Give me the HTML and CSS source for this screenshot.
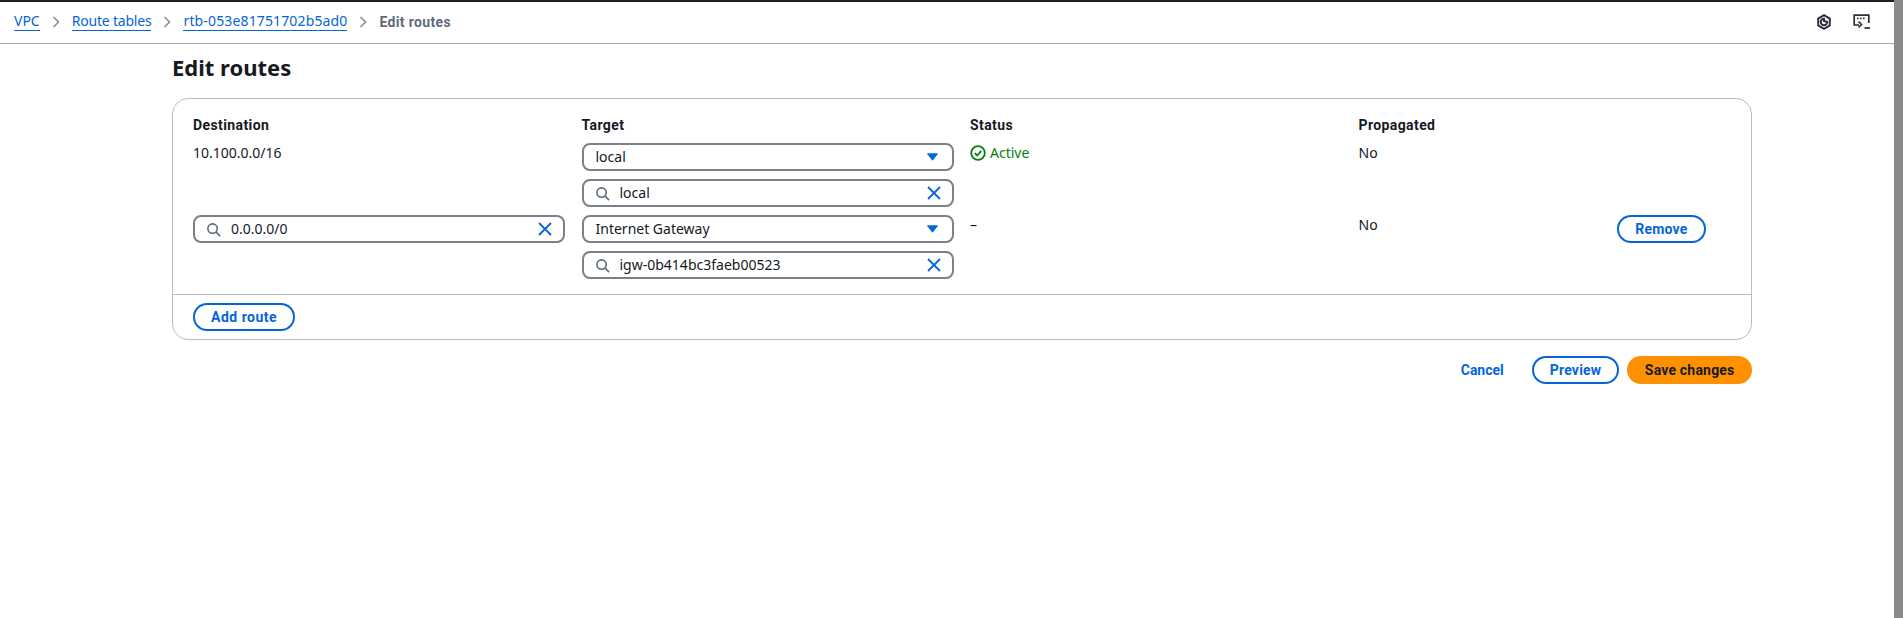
FILE: index.html
```html
<!DOCTYPE html>
<html>
<head>
	<title>Edit routes</title>
	<link rel="stylesheet" href="styles.css">
</head>
<body>
	<div class="app">
		<div class="main">
			<header class="topbar">
				<nav class="crumbs">
					<a class="crumb" href="#">VPC</a>
					<svg class="chev" viewBox="0 0 8 12"><path d="M1.5 1l5 5-5 5"/></svg>
					<a class="crumb crumb-tight" href="#">Route tables</a>
					<svg class="chev" viewBox="0 0 8 12"><path d="M1.5 1l5 5-5 5"/></svg>
					<a class="crumb crumb-wide" href="#">rtb-053e81751702b5ad0</a>
					<svg class="chev" viewBox="0 0 8 12"><path d="M1.5 1l5 5-5 5"/></svg>
					<span class="crumb-current">Edit routes</span>
				</nav>
				<div class="tools">
					<svg class="tool" viewBox="0 0 16 16"><path d="M8 1.2l5.8 3.4v6.8L8 14.8l-5.8-3.4V4.6z"/><path d="M8 4.8A3.2 3.2 0 1 0 11.2 8L8 7z"/></svg>
					<svg class="tool tool-term" viewBox="0 0 18 16"><path d="M6 11H1.2V1.2h14.6V9"/><path class="term-dots" d="M4 4.4h1.6M7 4.4h1.6M10 4.4h1.6"/><path d="M5.5 7.5l3 3-3 3"/><path d="M11.5 14h5.5"/></svg>
				</div>
			</header>

			<div class="content">
				<h1 class="title">Edit routes</h1>

				<section class="card">
					<div class="routes">
						<div class="col-head">Destination</div>
						<div class="col-head">Target</div>
						<div class="col-head">Status</div>
						<div class="col-head">Propagated</div>

						<div class="cell">10.100.0.0/16</div>
						<div class="cell stack">
							<div class="field field-select">
								<span class="field-text">local</span>
								<svg class="caret" viewBox="0 0 12 8"><path d="M0.5 0.5h11L6 7.5z"/></svg>
							</div>
							<div class="field">
								<svg class="search" viewBox="0 0 16 16"><circle cx="7" cy="7" r="5"/><path d="M10.6 10.6L15 15"/></svg>
								<span class="field-text">local</span>
								<svg class="clear" viewBox="0 0 14 14"><path d="M1 1l12 12M13 1L1 13"/></svg>
							</div>
						</div>
						<div class="cell status-ok">
							<svg class="check" viewBox="0 0 16 16"><circle cx="8" cy="8" r="6.8"/><path d="M4.8 8.2l2.3 2.3 4.2-4.6"/></svg>
							Active
						</div>
						<div class="cell">No</div>

						<div class="cell">
							<div class="field">
								<svg class="search" viewBox="0 0 16 16"><circle cx="7" cy="7" r="5"/><path d="M10.6 10.6L15 15"/></svg>
								<span class="field-text">0.0.0.0/0</span>
								<svg class="clear" viewBox="0 0 14 14"><path d="M1 1l12 12M13 1L1 13"/></svg>
							</div>
						</div>
						<div class="cell stack">
							<div class="field field-select">
								<span class="field-text">Internet Gateway</span>
								<svg class="caret" viewBox="0 0 12 8"><path d="M0.5 0.5h11L6 7.5z"/></svg>
							</div>
							<div class="field">
								<svg class="search" viewBox="0 0 16 16"><circle cx="7" cy="7" r="5"/><path d="M10.6 10.6L15 15"/></svg>
								<span class="field-text">igw-0b414bc3faeb00523</span>
								<svg class="clear" viewBox="0 0 14 14"><path d="M1 1l12 12M13 1L1 13"/></svg>
							</div>
						</div>
						<div class="cell">–</div>
						<div class="cell cell-last">
							<span>No</span>
							<button class="btn" type="button">Remove</button>
						</div>
					</div>
					<div class="card-foot">
						<button class="btn btn-wide" type="button">Add route</button>
					</div>
				</section>

				<div class="actions">
					<a class="btn-link" href="#">Cancel</a>
					<button class="btn" type="button">Preview</button>
					<button class="btn btn-primary" type="button">Save changes</button>
				</div>
			</div>
		</div>
		<div class="scroll-strip"></div>
	</div>
</body>
</html>
```

FILE: styles.css
```css
* {
	box-sizing: border-box;
}
html, body {
	margin: 0;
	height: 100%;
	overflow: hidden;
}
body {
	font-family: "Noto Sans", "Open Sans", sans-serif;
	font-size: 14px;
	line-height: 20px;
	color: #16191f;
	background: #fff;
}
.app {
	display: flex;
	height: 618px;
}
.main {
	flex: 1;
	min-width: 0;
	border-top: 2px solid #1b2028;
}
.scroll-strip {
	width: 9px;
	background: #8a8a8a;
}

/* barra de cima */
.topbar {
	display: flex;
	justify-content: space-between;
	align-items: center;
	height: 42px;
	padding: 0 23px 2px 14px;
	border-bottom: 1px solid #a9a9ad;
}
.crumbs {
	display: flex;
	align-items: center;
	gap: 12px;
}
.crumb {
	color: #0565d8;
	text-decoration: none;
	border-bottom: 1px solid #0565d8;
	line-height: 18px;
}
.crumb-tight {
	letter-spacing: -0.2px;
}
.crumb-wide {
	letter-spacing: 0.14px;
}
.crumb-current {
	color: #5f6b7a;
	font-family: Roboto, sans-serif;
	font-weight: 700;
	letter-spacing: 0.35px;
}
.chev {
	width: 8px;
	height: 12px;
	fill: none;
	stroke: #8c8c94;
	stroke-width: 1.6;
}
.tools {
	display: flex;
	align-items: center;
	gap: 21px;
}
.tool {
	width: 16px;
	height: 16px;
	fill: none;
	stroke: #2b3038;
	stroke-width: 2;
}
.tool-term {
	width: 18px;
	stroke-width: 1.7;
}
.term-dots {
	stroke-width: 1.6;
}

.content {
	padding: 0 142px 0 172px;
}
.title {
	margin: 8px 0 16px;
	font-size: 22px;
	line-height: 30px;
	font-weight: 700;
}

/* cartao das rotas */
.card {
	border: 1px solid #bcbcc0;
	border-radius: 16px;
}
.routes {
	display: grid;
	grid-template-columns: repeat(4, 372px);
	column-gap: 16.5px;
	row-gap: 8px;
	padding: 16px 20px 15px;
}
.col-head {
	font-family: Roboto, sans-serif;
	font-weight: 700;
	letter-spacing: 0.4px;
}
.stack {
	display: flex;
	flex-direction: column;
	gap: 8px;
}
.status-ok {
	display: flex;
	align-items: flex-start;
	gap: 4px;
	color: #037f0c;
}
.check {
	width: 16px;
	height: 16px;
	margin-top: 2px;
	fill: none;
	stroke: #037f0c;
	stroke-width: 1.8;
}
.cell-last {
	display: flex;
	justify-content: space-between;
	align-items: flex-start;
	padding-right: 25px;
}
.field {
	display: flex;
	align-items: center;
	height: 28px;
	padding: 0 11px 0 11px;
	border: 2px solid #7d8089;
	border-radius: 8px;
}
.field-text {
	flex: 1;
}
.field-select .field-text {
	padding-left: 1px;
}
.search {
	width: 15px;
	height: 15px;
	margin-right: 10px;
	fill: none;
	stroke: #5f6b7a;
	stroke-width: 1.7;
}
.clear {
	width: 14px;
	height: 14px;
	fill: none;
	stroke: #0565d8;
	stroke-width: 1.8;
}
.caret {
	width: 11px;
	height: 8px;
	margin-right: 3px;
	fill: #0565d8;
	stroke: #0565d8;
}
.card-foot {
	padding: 8px 20px;
	border-top: 1px solid #bcbcc0;
}

/* botoes */
.btn {
	height: 28px;
	padding: 0 16px;
	font: 700 14px/20px Roboto, sans-serif;
	letter-spacing: 0.2px;
	color: #0565d8;
	background: #fff;
	border: 2px solid #0565d8;
	border-radius: 20px;
}
.btn-wide {
	letter-spacing: 0.5px;
}
.btn-primary {
	padding: 0 15.5px;
	color: #16191f;
	background: #ff9100;
	border-color: #ff9100;
}
.btn-link {
	margin-right: 20px;
	font-family: Roboto, sans-serif;
	font-weight: 700;
	color: #0565d8;
	text-decoration: none;
}
.actions {
	display: flex;
	justify-content: flex-end;
	align-items: center;
	gap: 8px;
	margin-top: 16px;
}
```
